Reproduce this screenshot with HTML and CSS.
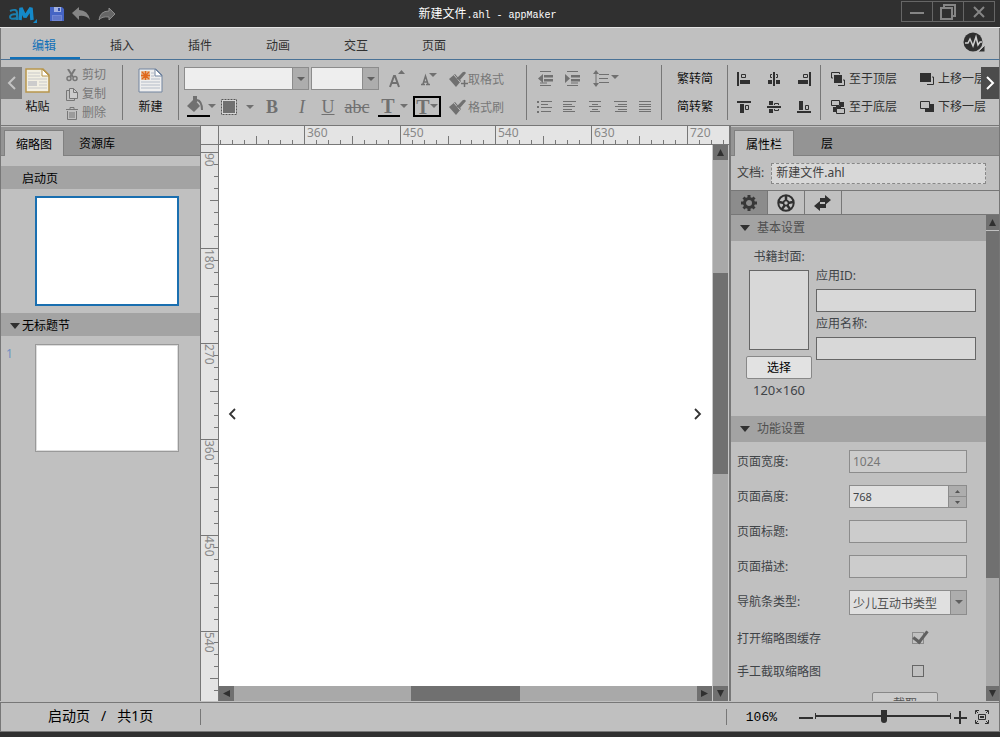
FILE: index.html
```html
<!DOCTYPE html>
<html lang="zh-CN">
<head>
<meta charset="utf-8">
<title>新建文件.ahl - appMaker</title>
<link rel="stylesheet" href="styles.css">
</head>
<body>
<header class="titlebar">
  <div class="quick">
    <svg class="logo" width="30" height="20" viewBox="0 0 30 20" role="img" aria-label="aM"><path d="M2 7q7-3 7 2v7M9 10q-7 0-7 3t7 1" fill="none" stroke="#1b7fae" stroke-width="2"/><path d="M12 16l1-12 4 9 6-9 1 12" fill="none" stroke="#1489c9" stroke-width="3.500" stroke-linejoin="bevel"/><path d="M29 15v4h-4z" fill="#1489c9"/></svg>
    <button class="plain" aria-label="保存"><svg width="14" height="14" viewBox="0 0 14 14"><path d="M0 0h12l2 2v12H0z" fill="#4564c4"/><path d="M4 0h7v5H4z" fill="#a4b2e0"/><path d="M8 1h2v3H8z" fill="#3450ac"/><path d="M2 8h10v6H2z" fill="#7086d4"/><path d="M3 10h8M3 12h8" stroke="#5069bd"/></svg></button>
    <button class="plain" aria-label="撤销"><svg width="18" height="14" viewBox="0 0 18 14"><path d="M7 0v3q9 0 11 10-4-5-11-4v4L0 6z" fill="#858585"/></svg></button>
    <button class="plain" aria-label="重做"><svg width="18" height="14" viewBox="0 0 18 14"><path d="M11 1v3Q2 4 1 13q3-4 10-3v3l6-6z" fill="#666" stroke="#8c8c8c"/></svg></button>
  </div>
  <h1 class="title">新建文件<span class="mono">.ahl - appMaker</span></h1>
  <div class="winbtns">
    <button aria-label="最小化"><svg width="16" height="16" viewBox="0 0 16 16"><path d="M1 9h14" stroke="#858585" stroke-width="2"/></svg></button>
    <button aria-label="还原"><svg width="16" height="16" viewBox="0 0 16 16"><path d="M4 3V1h11v11h-3M1 4h11v11H1z" fill="none" stroke="#858585" stroke-width="2"/></svg></button>
    <button aria-label="关闭"><svg width="16" height="16" viewBox="0 0 16 16"><path d="M3 3l10 10M13 3L3 13" stroke="#858585" stroke-width="2"/></svg></button>
  </div>
</header>

<nav class="menu">
  <button class="menu-tab active">编辑</button>
  <button class="menu-tab">插入</button>
  <button class="menu-tab">插件</button>
  <button class="menu-tab">动画</button>
  <button class="menu-tab">交互</button>
  <button class="menu-tab">页面</button>
  <button class="plain pulse" aria-label="状态"><svg width="22" height="20" viewBox="0 0 22 20"><circle cx="10" cy="10" r="9.500" fill="#303030"/><path d="M2 11h3l2-4 3 7 3-9 2 8 2-3h2" fill="none" stroke="#d0d0d0" stroke-width="1.500"/><path d="M22 13v7h-7z" fill="#303030" stroke="#c0c0c0"/></svg></button>
</nav>

<section class="ribbon">
  <button class="scroll-btn left" aria-label="向左"><svg width="10" height="14" viewBox="0 0 10 14"><path d="M8 1L2 7l6 6" fill="none" stroke="#c4c4c4" stroke-width="2"/></svg></button>
  <div class="group clip">
    <button class="big"><svg width="25" height="25" viewBox="0 0 25 25"><path d="M1 1h17l6 6v17H1z" fill="#f2efe2" stroke="#b8964c" stroke-width="1.500"/><path d="M17 1v7h7z" fill="#fff" stroke="#b8964c"/><path d="M3 5h12M3 8h12M3 11h19M14 14h8M14 17h8M3 20h19" stroke="#c9c9c9"/><path d="M3 13h9v5H3z" fill="#ccc"/></svg>粘贴</button>
    <div class="small-list">
      <button class="dim"><svg width="12" height="13" viewBox="0 0 12 13"><path d="M2 0l5 8M9 0L4 8" stroke="#777" stroke-width="2"/><circle cx="3" cy="9.500" r="2" fill="none" stroke="#777" stroke-width="1.500"/><circle cx="9" cy="9.500" r="2" fill="none" stroke="#777" stroke-width="1.500"/></svg>剪切</button>
      <button class="dim"><svg width="12" height="13" viewBox="0 0 12 13"><path d="M3 2.500H.5v10h8V11" fill="none" stroke="#777"/><path d="M3.500.5h4l4 4v6h-8z" fill="#ccc" stroke="#777"/><path d="M7.500.5v4h4" fill="none" stroke="#777"/></svg>复制</button>
      <button class="dim"><svg width="12" height="13" viewBox="0 0 12 13"><path d="M0 2.500h12M4 2V.5h4V2M1.500 4v8.500h9V4M4 5v6M6 5v6M8 5v6" fill="none" stroke="#777"/></svg>删除</button>
    </div>
  </div>
  <div class="group new">
    <button class="big"><svg width="25" height="25" viewBox="0 0 25 25"><path d="M1 1h17l6 6v17H1z" fill="#eee" stroke="#7285a0"/><path d="M17 1v7h7z" fill="#fff" stroke="#7285a0"/><path d="M13 5h3M13 8h3M13 11h9M3 14h19M3 17h19M3 20h19" stroke="#b4bcc8"/><path d="M3 3h9v9H3z" fill="#e4b68e"/><path d="M7.500 3v9M3 7.500h9M4 4l7 7M11 4l-7 7" stroke="#e0681c" stroke-width="1.300"/></svg>新建</button>
  </div>
  <div class="group font">
    <div class="row">
      <span class="combo family"><select aria-label="字体"><option></option></select></span>
      <span class="combo size"><select aria-label="字号"><option></option></select></span>
      <button class="ic w36" aria-label="增大字号"><svg width="16" height="18" viewBox="0 0 16 18"><path d="M1 17l4-11h1l4 11M3 13h5" fill="none" stroke="#707070" stroke-width="2"/><path d="M9 4l3.500-4L16 4z" fill="#707070"/></svg></button>
      <button class="ic w28" aria-label="减小字号"><svg width="16" height="14" viewBox="0 0 16 14"><path d="M2 12l2.500-8 2.500 8M3 10h4M0 12.500h4M5 12.500h4" fill="none" stroke="#707070" stroke-width="1.500"/><path d="M8 1h8l-4 4z" fill="#707070"/></svg></button>
      <button class="dim brush"><svg width="19" height="17" viewBox="0 0 19 17"><path d="M0 8l6-5 6 7-5 6z" fill="#707070"/><path d="M5 4l6 7" stroke="#c0c0c0"/><path d="M7 8l5-5q3-4 5-1l-6 7z" fill="#707070"/><path d="M15.500 9v7M12 12.500h7" stroke="#707070" stroke-width="1.500"/></svg>取格式</button>
    </div>
    <div class="row">
      <button class="ic w34" aria-label="填充颜色"><svg width="30" height="21" viewBox="0 0 30 21"><path d="M1 10l7-7 6 7-6 6z" fill="#707070"/><path d="M8 8V1h2v5M11 4q5 1 5 10" fill="none" stroke="#707070" stroke-width="2"/><path d="M22 8h8l-4 4z" fill="#707070"/><path d="M1 20h23" stroke="#000" stroke-width="2"/></svg></button>
      <button class="ic w39" aria-label="边框"><svg width="33" height="16" viewBox="0 0 33 16"><path d="M.5.5h15v15H.5z" fill="#d8d8d8" stroke="#555" stroke-dasharray="2 1"/><path d="M2 2h12v12H2z" fill="#707070"/><path d="M25 6h8l-4 4z" fill="#707070"/></svg></button>
      <button class="ic w30 glyph" aria-label="粗体"><b>B</b></button>
      <button class="ic w30 glyph" aria-label="斜体"><i>I</i></button>
      <button class="ic w22 glyph" aria-label="下划线"><u>U</u></button>
      <button class="ic w36 glyph" aria-label="删除线"><s>abc</s></button>
      <button class="ic w36 glyph" aria-label="文字颜色"><span class="tcolor">T</span><svg width="8" height="5" viewBox="0 0 8 5"><path d="M0 0h8L4 4z" fill="#707070"/></svg></button>
      <button class="ic tbox glyph" aria-label="文字背景">T<svg width="8" height="5" viewBox="0 0 8 5"><path d="M0 0h8L4 4z" fill="#707070"/></svg></button>
      <button class="dim brush"><svg width="19" height="17" viewBox="0 0 19 17"><path d="M0 8l6-5 6 7-5 6z" fill="#707070"/><path d="M5 4l6 7" stroke="#c0c0c0"/><path d="M7 8l5-5q3-4 5-1l-6 7z" fill="#707070"/></svg>格式刷</button>
    </div>
  </div>
  <div class="group para">
    <div class="row">
      <button class="ic w27" aria-label="减少缩进"><svg width="15" height="15" viewBox="0 0 15 15"><path d="M2 .5h11M2 14.500h11M2 12h7" stroke="#707070"/><path d="M0 7.500L5 3v9zM6 4h9v2.500H6zM6 8h9v2.500H6z" fill="#707070"/></svg></button>
      <button class="ic w27" aria-label="增加缩进"><svg width="15" height="15" viewBox="0 0 15 15"><path d="M2 .5h11M2 14.500h11M6 12h7" stroke="#707070"/><path d="M5 7.500L0 3v9zM6 4h9v2.500H6zM6 8h9v2.500H6z" fill="#707070"/></svg></button>
      <button class="ic w39" aria-label="行距"><svg width="26" height="17" viewBox="0 0 26 17"><path d="M3 2v13M6 4.500h10M6 8.500h9M6 12.500h10" stroke="#707070"/><path d="M0 4l3-4 3 4zM0 13l3 4 3-4zM18 5h8l-4 4z" fill="#707070"/></svg></button>
    </div>
    <div class="row">
      <button class="ic w25" aria-label="项目符号"><svg width="15" height="13" viewBox="0 0 15 13"><path d="M4 1.500h11M4 4.500h7M4 7.500h11M4 11.500h10" stroke="#707070"/><path d="M0 1h2v2H0zM0 6h2v2H0zM0 11h2v2H0z" fill="#707070"/></svg></button>
      <button class="ic w25" aria-label="左对齐"><svg width="14" height="12" viewBox="0 0 14 12"><path d="M0 .5h13M0 3.500h9M0 5.500h12M0 8.500h9M0 10.500h12" stroke="#707070"/></svg></button>
      <button class="ic w25" aria-label="居中"><svg width="14" height="12" viewBox="0 0 14 12"><path d="M1 .5h12M4 3.500h6M1 5.500h12M4 8.500h6M2 10.500h10" stroke="#707070"/></svg></button>
      <button class="ic w25" aria-label="右对齐"><svg width="14" height="12" viewBox="0 0 14 12"><path d="M1 .5h13M5 3.500h9M2 5.500h12M5 8.500h9M2 10.500h12" stroke="#707070"/></svg></button>
      <button class="ic w25" aria-label="两端对齐"><svg width="14" height="12" viewBox="0 0 14 12"><path d="M1 .5h12M1 3.500h12M1 5.500h12M1 8.500h12M1 10.500h12" stroke="#707070"/></svg></button>
    </div>
  </div>
  <div class="group conv">
    <div class="row"><button>繁转简</button></div>
    <div class="row"><button>简转繁</button></div>
  </div>
  <div class="group align">
    <div class="row">
      <button class="ic w30" aria-label="左边对齐"><svg width="14" height="14" viewBox="0 0 14 14"><path d="M1 0v14" stroke="#303030" stroke-width="2"/><path d="M4.500 2.500h4v3h-4z" fill="none" stroke="#303030"/><path d="M3 8h10v4H3z" fill="#303030"/></svg></button>
      <button class="ic w30" aria-label="水平居中"><svg width="14" height="14" viewBox="0 0 14 14"><path d="M7 0v14" stroke="#303030" stroke-width="2"/><path d="M5 2.500H3.500v3H5M9 2.500h1.500v3H9" fill="none" stroke="#303030"/><path d="M1 8h4v4H1zM9 8h4v4H9z" fill="#303030"/></svg></button>
      <button class="ic w30" aria-label="右边对齐"><svg width="14" height="14" viewBox="0 0 14 14"><path d="M13 0v14" stroke="#303030" stroke-width="2"/><path d="M6.500 2.500h4v3h-4z" fill="none" stroke="#303030"/><path d="M1 8h10v4H1z" fill="#303030"/></svg></button>
    </div>
    <div class="row">
      <button class="ic w30" aria-label="顶端对齐"><svg width="14" height="14" viewBox="0 0 14 14"><path d="M0 2h14" stroke="#303030" stroke-width="2"/><path d="M8.500 5.500h3v4h-3z" fill="none" stroke="#303030"/><path d="M3 4h4v9H3z" fill="#303030"/></svg></button>
      <button class="ic w30" aria-label="垂直居中"><svg width="14" height="14" viewBox="0 0 14 14"><path d="M0 7h14" stroke="#303030" stroke-width="2"/><path d="M7.500 5V3.500h4V5M7.500 9v1.500h4V9" fill="none" stroke="#303030"/><path d="M2 1h4v4H2zM2 9h4v4H2z" fill="#303030"/></svg></button>
      <button class="ic w30" aria-label="底端对齐"><svg width="14" height="14" viewBox="0 0 14 14"><path d="M0 12h14" stroke="#303030" stroke-width="2"/><path d="M8.500 5.500h3v4h-3z" fill="none" stroke="#303030"/><path d="M2 1h4v9H2z" fill="#303030"/></svg></button>
    </div>
  </div>
  <div class="group order">
    <div class="row">
      <button><svg width="14" height="14" viewBox="0 0 14 14"><path d="M2 6H.5V.5h8V2M13.500 8v5.500H7M13.500 8H12" fill="none" stroke="#303030"/><path d="M3 3h8v8H3z" fill="#303030"/></svg>至于顶层</button>
      <button><svg width="14" height="14" viewBox="0 0 14 14"><path d="M0 1h11v9H0z" fill="#303030"/><path d="M12 5h1.500v7.500H7" fill="none" stroke="#303030"/></svg>上移一层</button>
    </div>
    <div class="row">
      <button><svg width="14" height="14" viewBox="0 0 14 14"><path d="M9 2h4v5H9zM2 7h4v5H2z" fill="#303030"/><path d="M.5.5h8v5h-8zM5.500 8.500h8v5h-8z" fill="#c0c0c0" stroke="#303030"/><path d="M5 6h5v2H5z" fill="#303030"/></svg>至于底层</button>
      <button><svg width="14" height="14" viewBox="0 0 14 14"><path d="M5 4h9v8H5z" fill="#303030"/><path d="M.5 1.500h9v7h-9z" fill="#c0c0c0" stroke="#303030"/></svg>下移一层</button>
    </div>
  </div>
  <button class="scroll-btn right" aria-label="向右"><svg width="10" height="14" viewBox="0 0 10 14"><path d="M2 1l6 6-6 6" fill="none" stroke="#fff" stroke-width="2"/></svg></button>
</section>

<main class="work">
  <aside class="panel pages">
    <div class="tabs"><button class="tab active">缩略图</button><button class="tab">资源库</button></div>
    <div class="page-list">
      <h2 class="bar"><span class="tri hidden"></span>启动页</h2>
      <div class="thumb-row"><span class="num"></span><button class="thumb selected" aria-label="启动页"></button></div>
      <h2 class="bar"><span class="tri"></span>无标题节</h2>
      <div class="thumb-row second"><span class="num">1</span><button class="thumb" aria-label="第1页"></button></div>
    </div>
  </aside>

  <section class="stage">
    <div class="corner"></div>
    <svg class="ruler-h" id="ruler-h"></svg>
    <svg class="ruler-v" id="ruler-v"></svg>
    <div class="canvas">
      <button class="plain" aria-label="上一页"><svg width="10" height="12" viewBox="0 0 10 12"><path d="M8 1L3 6l5 5" fill="none" stroke="#333" stroke-width="1.800"/></svg></button>
      <button class="plain" aria-label="下一页"><svg width="10" height="12" viewBox="0 0 10 12"><path d="M2 1l5 5-5 5" fill="none" stroke="#333" stroke-width="1.800"/></svg></button>
    </div>
    <div class="vbar stage-v">
      <button aria-label="向上滚动"><svg width="7" height="7" viewBox="0 0 7 7"><path d="M0 7l3.500-7L7 7z"/></svg></button>
      <div class="gap-a"></div><div class="thumbbar"></div><div class="gap-b"></div>
      <button aria-label="向下滚动"><svg width="7" height="7" viewBox="0 0 7 7"><path d="M0 0l3.500 7L7 0z"/></svg></button>
    </div>
    <div class="hbar">
      <button aria-label="向左滚动"><svg width="7" height="7" viewBox="0 0 7 7"><path d="M7 0L0 3.500 7 7z"/></svg></button>
      <div class="gap-a"></div><div class="thumbbar"></div><div class="gap-a"></div>
      <button aria-label="向右滚动"><svg width="7" height="7" viewBox="0 0 7 7"><path d="M0 0l7 3.500L0 7z"/></svg></button>
    </div>
  </section>

  <aside class="panel props">
    <div class="tabs"><button class="tab active">属性栏</button><button class="tab">层</button></div>
    <div class="doc"><label for="doc">文档:</label><input id="doc" type="text" value="新建文件.ahl" readonly></div>
    <div class="modes">
      <button class="on" aria-label="设置"><svg width="18" height="18" viewBox="0 0 18 18"><circle cx="9" cy="9" r="4.500" fill="none" stroke="#383838" stroke-width="3"/><path d="M9 1v3M9 14v3M1 9h3M14 9h3M3.500 3.500l2 2M12.500 12.500l2 2M14.500 3.500l-2 2M5.500 12.500l-2 2" stroke="#383838" stroke-width="3"/></svg></button>
      <button aria-label="动作"><svg width="18" height="18" viewBox="0 0 18 18"><circle cx="9" cy="9" r="7.700" fill="none" stroke="#303030" stroke-width="2"/><path d="M9 2v5M16 8l-5 1M13 15l-3-4M5 15l3-4M2 8l5 1" stroke="#303030" stroke-width="2.500"/><circle cx="9" cy="9" r="2.500" fill="none" stroke="#303030" stroke-width="1.500"/></svg></button>
      <button aria-label="交互"><svg width="18" height="16" viewBox="0 0 18 16"><path d="M11 0l6 5-6 5V7H6V3h5zM6 6v3h6v4H6v3l-6-5z" fill="#303030"/></svg></button>
    </div>
    <div class="scroller">
      <form class="settings">
        <h3 class="section"><span class="tri"></span>基本设置</h3>
        <div class="basic">
          <div class="cover">
            <span class="cover-label">书籍封面:</span>
            <div class="cover-box"></div>
            <button type="button" class="choose">选择</button>
            <span class="dims">120×160</span>
          </div>
          <div class="ids">
            <label for="appid">应用ID:</label><input id="appid" type="text">
            <label for="appname">应用名称:</label><input id="appname" type="text">
          </div>
        </div>
        <h3 class="section"><span class="tri"></span>功能设置</h3>
        <div class="fields">
          <label for="pw">页面宽度:</label><input id="pw" class="box" type="text" value="1024" disabled>
          <label for="ph">页面高度:</label>
          <div class="spin"><input id="ph" type="number" value="768"><span class="steps"><button type="button" aria-label="增加"><svg width="5" height="3" viewBox="0 0 5 3"><path d="M0 3l2.500-3L5 3z" fill="#555"/></svg></button><button type="button" aria-label="减少"><svg width="5" height="3" viewBox="0 0 5 3"><path d="M0 0l2.500 3L5 0z" fill="#555"/></svg></button></span></div>
          <label for="pt">页面标题:</label><input id="pt" class="box" type="text" disabled>
          <label for="pd">页面描述:</label><input id="pd" class="box" type="text" disabled>
          <label for="nav">导航条类型:</label><span class="combo nav"><select id="nav"><option>少儿互动书类型</option></select></span>
          <label for="cache">打开缩略图缓存</label><input id="cache" type="checkbox" checked>
          <label for="manual">手工截取缩略图</label><input id="manual" type="checkbox">
          <button type="button" class="capture">截取</button>
        </div>
      </form>
      <div class="vbar props-v">
        <button aria-label="向上滚动"><svg width="7" height="7" viewBox="0 0 7 7"><path d="M0 7l3.500-7L7 7z"/></svg></button>
        <div class="thumbbar"></div><div class="gap-b"></div>
        <button aria-label="向下滚动"><svg width="7" height="7" viewBox="0 0 7 7"><path d="M0 0l3.500 7L7 0z"/></svg></button>
      </div>
    </div>
  </aside>
</main>

<footer class="status">
  <div class="where"><span>启动页</span><span>/</span><span>共1页</span></div>
  <div class="zoom">
    <span class="percent">106%</span>
    <button class="plain" aria-label="缩小"><svg width="14" height="14" viewBox="0 0 14 14"><path d="M0 8h14" stroke="#303030" stroke-width="2"/></svg></button>
    <input type="range" min="0" max="100" value="51" aria-label="缩放">
    <button class="plain" aria-label="放大"><svg width="14" height="14" viewBox="0 0 14 14"><path d="M1 8h13M7 1v13" stroke="#303030" stroke-width="2"/></svg></button>
    <button class="plain full" aria-label="全屏"><svg width="14" height="14" viewBox="0 0 14 14"><path d="M.5 4V.5H4M10 .5h3.500V4M13.500 10v3.500H10M4 13.500H.5V10M1 1l2 2M13 1l-2 2M13 13l-2-2M1 13l2-2M3.500 4.500h7v5h-7z" fill="none" stroke="#303030"/><path d="M5 6h4v2H5z" fill="#303030"/></svg></button>
  </div>
</footer>
<script src="ruler.js"></script>
</body>
</html>
```

FILE: styles.css
```css
* { box-sizing: border-box; }

body {
  margin: 0;
  height: 100vh;
  display: flex;
  flex-direction: column;
  overflow: hidden;
  background: #303030;
  color: #111;
  font: 12px/16px "Noto Sans", "Noto Sans CJK SC", sans-serif;
}

button, input, select { font: inherit; color: inherit; margin: 0; }
button { border: 0; padding: 0; background: none; white-space: nowrap; }
svg { display: block; flex: none; }
h1, h2, h3 { margin: 0; font: inherit; }
.plain { display: flex; align-items: center; }
.mono { font: 10px/16px "Liberation Mono", monospace; }

/* title bar */
.titlebar {
  display: grid;
  grid-template-columns: 1fr auto 1fr;
  height: 28px;
  flex: none;
  border-bottom: 1px solid #e4e4e4;
  color: #fff;
}
.quick { display: flex; align-items: center; gap: 8px; padding-left: 8px; }
.quick .logo { margin-right: 4px; }
.title { align-self: center; padding: 2px 25px 0 0; }
.winbtns { display: flex; justify-self: end; align-items: start; padding: 1px 5px 0 0; }
.winbtns button {
  display: grid;
  place-items: center;
  width: 31px;
  height: 21px;
  border: 1px solid #666;
}
.winbtns button:first-child { width: 32px; }
.winbtns button + button { border-left: 0; }

/* main menu */
.menu {
  display: flex;
  flex: none;
  height: 32px;
  padding-left: 4px;
  background: #c0c0c0;
  border-left: 1px solid #777;
  border-right: 1px solid #777;
  border-bottom: 1px solid #4a7296;
}
.menu-tab {
  width: 78px;
  padding-top: 4px;
  color: #303030;
}
.menu-tab.active {
  color: #1070b8;
  background: linear-gradient(#1070b8, #1070b8) right 3px bottom / 70px 2px no-repeat;
}
.pulse { margin-left: auto; padding: 0 14px 4px 0; }

/* ribbon */
.ribbon {
  position: relative;
  display: flex;
  flex: none;
  padding: 5px 0;
  height: 65px;
  background: #c0c0c0;
  border-left: 1px solid #777;
  border-right: 1px solid #777;
  overflow: hidden;
}
.group { flex: none; border-right: 1px solid #777; }
.row { display: flex; align-items: center; height: 27px; }
.row + .row { margin-top: 1px; }
.big {
  display: flex;
  flex-direction: column;
  align-items: center;
  gap: 6px;
  padding-top: 3px;
}
.clip { display: flex; gap: 16px; padding: 0 16px 0 24px; }
.small-list { display: flex; flex-direction: column; gap: 3px; padding-top: 2px; }
.small-list button { display: flex; align-items: center; gap: 4px; }
.dim { color: #777; }
.new { width: 56px; display: flex; justify-content: center; align-items: start; }
.font { width: 348px; padding-left: 5px; }
.para { width: 135px; padding-left: 5px; }
.conv { width: 66px; padding-left: 15px; }
.align { width: 93px; padding-left: 1px; }
.order { padding-left: 10px; border: 0; }
.conv .row, .order .row { padding-top: 1px; }
.order .row { gap: 23px; }
.order button { display: flex; align-items: center; gap: 4px; color: #303030; }

.ic { display: flex; align-items: center; justify-content: center; }
.w22 { width: 22px; }
.w25 { width: 25px; }
.w27 { width: 27px; }
.w28 { width: 28px; }
.w30 { width: 30px; }
.w34 { width: 34px; }
.w36 { width: 36px; }
.w39 { width: 39px; }
.glyph { font: 18px/18px "Liberation Serif", serif; color: #707070; }
.tcolor { font-size: 20px; font-weight: bold; border-bottom: 2px solid #000; padding: 0 5px 0 3px; }
.tbox { width: 28px; height: 21px; margin-left: 2px; border: 2px solid #000; font-size: 20px; font-weight: bold; }
.brush { display: flex; align-items: center; margin-left: auto; padding: 2px 22px 0 0; }

.combo {
  display: grid;
  grid-template-columns: 1fr 15px;
  align-items: center;
  justify-items: center;
  border: 1px solid #8c8c8c;
  background: linear-gradient(#8c8c8c, #8c8c8c) right 15px top / 1px 100% no-repeat, linear-gradient(#adadad, #adadad) right top / 15px 100% no-repeat, #eee;
}
.combo select {
  grid-area: 1 / 1 / 2 / 3;
  width: 100%;
  height: 100%;
  padding: 0 3px;
  border: 0;
  background: none;
  appearance: none;
}
.combo::after {
  grid-area: 1 / 2;
  content: "";
  border: 4px solid transparent;
  border-top-color: #606060;
  border-bottom: 0;
}
.family { width: 125px; height: 23px; margin-right: 2px; }
.size { width: 68px; height: 23px; }

.scroll-btn {
  position: absolute;
  top: 7px;
  display: grid;
  place-items: center;
  height: 32px;
}
.scroll-btn.left { left: 0; width: 21px; background: #808080; }
.scroll-btn.right { right: 0; width: 18px; background: #4c4c4c; }

/* work area */
.work {
  display: grid;
  grid-template-columns: 201px 1fr 270px;
  flex: 1;
  min-height: 0;
  padding-bottom: 1px;
  border-top: 1px solid #777;
  border-right: 1px solid #777;
  background: #c0c0c0;
}
.panel { display: flex; flex-direction: column; min-width: 0; min-height: 0; }
.pages { border-left: 1px solid #777; border-right: 1px solid #777; }
.props { border-left: 2px solid #777; }

.tabs {
  display: flex;
  flex: none;
  height: 30px;
  padding: 3px 3px 0;
  background: #949494;
  border-top: 1px solid #c0c0c0;
  box-shadow: inset 0 -1px #808080;
}
.tab { width: 66px; padding-top: 2px; color: #000; }
.tab.active { width: 60px; background: #c0c0c0; border: 1px solid #808080; border-bottom: 0; }
.page-list { padding-top: 10px; }
.bar {
  display: flex;
  align-items: center;
  gap: 2px;
  height: 23px;
  padding: 2px 0 0 9px;
  background: #a3a3a3;
  color: #000;
}
.tri { border: 5px solid transparent; border-top: 6px solid #303030; border-bottom: 0; }
.tri.hidden { visibility: hidden; }
.thumb-row { display: grid; grid-template-columns: 29px 144px; padding: 7px 0 7px 5px; }
.thumb { height: 110px; background: #fff; border: 1px solid #999; box-shadow: inset 0 0 0 1px #ddd; }
.thumb.selected { border: 2px solid #1a6fb0; box-shadow: none; }
.second { padding-top: 8px; }
.second .thumb { height: 108px; }
.num { padding-top: 2px; color: #6f90c0; }

.stage {
  display: grid;
  grid-template: 19px 1fr 15px / 18px 1fr 17px;
  min-width: 0;
  min-height: 0;
  background: #e4e4e4;
}
.corner { border-right: 1px solid #777; border-bottom: 1px solid #777; }
.ruler-h { grid-area: 1 / 2 / 2 / 4; width: 100%; height: 19px; border-bottom: 1px solid #777; overflow: visible; }
.ruler-v { grid-area: 2 / 1 / 4 / 2; width: 18px; height: 100%; border-right: 1px solid #777; min-height: 0; overflow: visible; }
.stage line { stroke: #777; shape-rendering: crispEdges; }
.stage text { fill: #888; }
.canvas {
  display: flex;
  justify-content: space-between;
  align-items: center;
  padding: 0 9px 3px 8px;
  background: #fff;
}

.vbar, .hbar { display: flex; background: #a9a9a9; }
.vbar { flex-direction: column; }
.vbar button, .hbar button { flex: 0 0 15px; display: grid; place-items: center; background: #707070; }
.vbar path, .hbar path { fill: #303030; }
.thumbbar { background: #707070; }
.stage-v { grid-area: 2 / 3 / 4 / 4; border: solid #c8c8c8; border-width: 0 1px; }
.stage-v .gap-a { flex: 113; }
.stage-v .thumbbar { flex: 201; }
.stage-v .gap-b { flex: 212; }
.hbar { grid-area: 3 / 2; }
.hbar .gap-a { flex: 177; }
.hbar .thumbbar { flex: 110; }

/* properties */
.doc { display: flex; align-items: center; gap: 7px; height: 34px; padding: 0 13px 0 6px; color: #404040; }
.doc input {
  flex: 1;
  min-width: 0;
  height: 21px;
  padding: 0 4px 2px;
  background: #d8d8d8;
  border: 1px dashed #888;
}
.modes { display: flex; flex: none; height: 25px; border: solid #777; border-width: 1px 0; }
.modes button { display: grid; place-items: center; width: 37px; border-right: 1px solid #777; }
.modes .on { background: #8c8c8c; }
.scroller { display: grid; grid-template-columns: 1fr 13px; flex: 1; min-height: 0; }
.settings { overflow: hidden; min-height: 0; color: #404448; }
.props-v .thumbbar { flex: 347; border-top: 1px solid #c0c0c0; }
.props-v .gap-b { flex: 108; }
.section { display: flex; align-items: center; gap: 7px; height: 26px; padding-left: 9px; background: #a3a3a3; color: #505050; }
.basic { display: flex; gap: 4px; height: 175px; padding: 8px 10px 0 15px; }
.cover { display: flex; flex-direction: column; align-items: center; width: 66px; }
.cover-box { width: 60px; height: 80px; margin: 5px 0 6px; background: #d8d8d8; border: 1px solid #666; }
.choose, .capture { height: 23px; padding-top: 1px; color: #000; background: #e2e2e2; border: 1px solid #888; border-radius: 2px; }
.choose { width: 66px; }
.dims { font-size: 13px; margin-top: 3px; }
.ids { flex: 1; display: flex; flex-direction: column; padding-top: 19px; min-width: 0; }
.ids input { height: 23px; margin: 5px 0 4px; width: 100%; background: #d8d8d8; border: 1px solid #666; }
.fields {
  display: grid;
  grid-template-columns: 1fr 118px;
  grid-template-rows: 35px 35px 35px 35px 36px 35px 32px 32px;
  align-items: center;
  padding: 2px 19px 0 6px;
}
.box { height: 23px; width: 100%; padding: 0 3px; color: #777; background: #ccc; border: 1px solid #8c8c8c; }
.spin { display: flex; height: 23px; border: 1px solid #8c8c8c; }
.spin input { flex: 1; min-width: 0; padding: 0 3px; border: 0; background: #e0e0e0; font-size: 11px; appearance: textfield; }
.spin input::-webkit-inner-spin-button { appearance: none; }
.steps { display: grid; width: 18px; border-left: 1px solid #8c8c8c; background: #adadad; }
.steps button { display: grid; place-items: center; }
.steps button + button { border-top: 1px solid #8c8c8c; }
.nav { height: 25px; background-color: #e0e0e0; }
.nav select { padding-top: 3px; color: #505050; }
.fields label[for="cache"], .fields label[for="manual"] { padding-top: 2px; }
.fields input[type="checkbox"] {
  justify-self: center;
  display: grid;
  width: 12px;
  height: 12px;
  margin-left: 20px;
  border: 1px solid #666;
  appearance: none;
}
.fields input[type="checkbox"]:checked { border-color: #8c8c8c; }
.fields input:checked::after {
  content: "";
  width: 6px;
  height: 12px;
  margin: -5px 0 0 3px;
  border: solid #606060;
  border-width: 0 3px 3px 0;
  transform: rotate(38deg);
}
.capture { grid-column: 2; width: 66px; margin-left: 23px; color: #555; background: #ccc; }

/* status bar */
.status {
  display: grid;
  grid-template-columns: 200px 1fr;
  flex: none;
  height: 30px;
  margin-bottom: 5px;
  align-items: center;
  background: #c0c0c0;
  border: 1px solid #777;
}
.where { display: flex; gap: 11px; height: 16px; padding-left: 47px; border-right: 1px solid #777; font-size: 14px; line-height: 14px; color: #000; }
.zoom { display: flex; align-items: center; justify-self: end; height: 16px; padding: 0 10px 0 19px; border-left: 1px solid #777; }
.percent { padding-top: 2px; font: 13px/16px "Liberation Mono", monospace; margin-right: 22px; color: #000; }
.zoom input {
  width: 136px;
  height: 16px;
  margin: 0 2px 2px;
  appearance: none;
  background:
    linear-gradient(#303030, #303030) center / 100% 2px no-repeat,
    linear-gradient(#303030, #303030) left center / 1px 6px no-repeat,
    linear-gradient(#303030, #303030) right center / 1px 6px no-repeat;
}
.zoom input::-webkit-slider-thumb {
  appearance: none;
  width: 6px;
  height: 13px;
  background: #303030;
  border-radius: 0 0 3px 3px;
}
.full { margin-left: 8px; }
```

FILE: ruler.js
```js
// Draws both rulers: a labelled tick every 90 units, split into eight parts.
const NS = "http://www.w3.org/2000/svg";
const STEP = 95.7;

function add(parent, name, attrs, text) {
  const node = document.createElementNS(NS, name);
  for (const key in attrs) node.setAttribute(key, attrs[key]);
  if (text) node.textContent = text;
  parent.appendChild(node);
}

function draw(id, vertical, origin, firstValue) {
  const svg = document.getElementById(id);
  const box = svg.getBoundingClientRect();
  const length = vertical ? box.height : box.width;
  const depth = vertical ? 17 : 18;
  svg.replaceChildren();
  for (let i = -8; origin + i * STEP / 8 < length; i++) {
    const at = Math.round(origin + i * STEP / 8);
    if (at < 0) continue;
    const size = i % 8 === 0 ? depth : i % 4 === 0 ? 8 : 4;
    add(svg, "line", vertical
      ? { x1: depth - size, x2: depth, y1: at, y2: at }
      : { x1: at, x2: at, y1: depth - size, y2: depth });
    if (i % 8 === 0) {
      add(svg, "text", vertical
        ? { transform: `translate(4 ${at + 1}) rotate(90)` }
        : { x: at + 3, y: 11 }, String(firstValue + i / 8 * 90));
    }
  }
}

function drawAll() {
  draw("ruler-h", false, 85, 360);
  draw("ruler-v", true, 7, 90);
}
window.addEventListener("resize", drawAll);
drawAll();
```
